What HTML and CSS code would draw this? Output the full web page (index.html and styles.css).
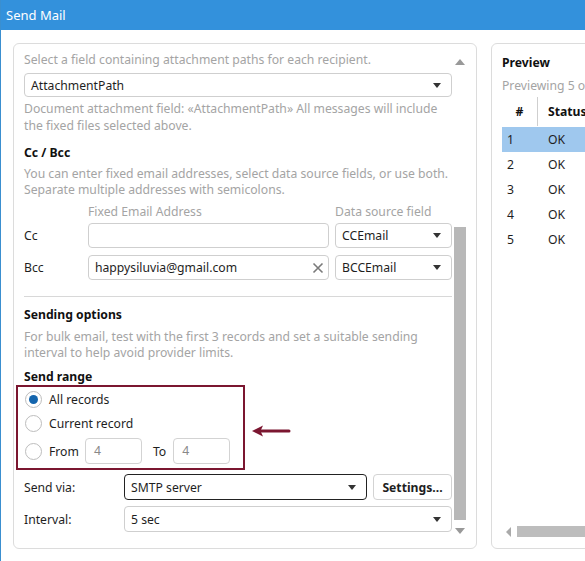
FILE: index.html
```html
<!DOCTYPE html>
<html>
<head>
<meta charset="utf-8">
<link rel="stylesheet" href="styles.css">
</head>
<body>
<div class="window">
  <div class="titlebar">Send Mail</div>
  <div class="main">
    <div class="panel left">
      <div class="content">
        <p class="hint first">Select a field containing attachment paths for each recipient.</p>
        <div class="select wide"><span>AttachmentPath</span><i class="caret"></i></div>
        <p class="hint desc1">Document attachment field: «AttachmentPath» All messages will include<br>the fixed files selected above.</p>
        <h3 class="heading h-cc">Cc / Bcc</h3>
        <p class="hint desc2">You can enter fixed email addresses, select data source fields, or use both.<br>Separate multiple addresses with semicolons.</p>
        <div class="colheads"><span class="ch1 hint">Fixed Email Address</span><span class="ch2 hint">Data source field</span></div>
        <div class="addr-row">
          <span class="lbl">Cc</span>
          <div class="input addr"></div>
          <div class="select ds"><span>CCEmail</span><i class="caret"></i></div>
        </div>
        <div class="addr-row second">
          <span class="lbl">Bcc</span>
          <div class="input addr"><span>happysiluvia@gmail.com</span>
            <svg class="clear" width="12" height="12" viewBox="0 0 12 12"><path d="M1.5 1.5 L10.5 10.5 M10.5 1.5 L1.5 10.5" stroke="#7a7a7a" stroke-width="1.6" fill="none"/></svg>
          </div>
          <div class="select ds"><span>BCCEmail</span><i class="caret"></i></div>
        </div>
        <div class="divider"></div>
        <h3 class="heading h-send">Sending options</h3>
        <p class="hint desc3">For bulk email, test with the first 3 records and set a suitable sending<br>interval to help avoid provider limits.</p>
        <h3 class="heading h-range">Send range</h3>
        <div class="range-row">
          <div class="range-box">
            <label class="radio-row r1"><span class="radio checked"></span><span>All records</span></label>
            <label class="radio-row r2"><span class="radio"></span><span>Current record</span></label>
            <label class="radio-row r3"><span class="radio"></span><span>From</span><span class="num from">4</span><span class="to">To</span><span class="num">4</span></label>
          </div>
          <svg class="arrow" width="40" height="14" viewBox="0 0 40 14"><path d="M38 7 H10" stroke="#7b1630" stroke-width="3" stroke-linecap="round"/><path d="M1 7 L12 1.5 L9.5 7 L12 12.5 Z" fill="#7b1630"/></svg>
        </div>
        <div class="via-row first-via">
          <span class="lbl2">Send via:</span>
          <div class="select via focused"><span>SMTP server</span><i class="caret"></i></div>
          <div class="button">Settings...</div>
        </div>
        <div class="via-row interval">
          <span class="lbl2">Interval:</span>
          <div class="select intv"><span>5 sec</span><i class="caret"></i></div>
        </div>
      </div>
      <div class="vscroll">
        <i class="arr-up"></i>
        <div class="track"><div class="thumb"></div></div>
        <i class="arr-down"></i>
      </div>
    </div>
    <div class="panel right">
      <h3 class="heading preview">Preview</h3>
      <p class="hint pv">Previewing 5 of 5 records</p>
      <div class="table">
        <div class="thead"><span class="c1">#</span><span class="c2">Status</span></div>
        <div class="tr sel"><span class="c1">1</span><span class="c2">OK</span></div>
        <div class="tr"><span class="c1">2</span><span class="c2">OK</span></div>
        <div class="tr"><span class="c1">3</span><span class="c2">OK</span></div>
        <div class="tr"><span class="c1">4</span><span class="c2">OK</span></div>
        <div class="tr"><span class="c1">5</span><span class="c2">OK</span></div>
      </div>
      <div class="hscroll"><i class="arr-left"></i><div class="hthumb"></div></div>
    </div>
  </div>
</div>
</body>
</html>
```

FILE: styles.css
```css
* { box-sizing: border-box; }
html, body { margin: 0; padding: 0; background: #fff; overflow: hidden; }
body {
  font-family: "Noto Sans", "Open Sans", sans-serif;
  font-size: 12.2px;
  color: #1e1e1e;
  width: 585px;
  height: 561px;
}
.window {
  height: 561px;
  border-left: 1px solid #3a8fd0;
  display: flex;
  flex-direction: column;
  overflow: hidden;
}
.titlebar {
  height: 30px;
  background: #3391dc;
  color: #fff;
  font-size: 13px;
  line-height: 31px;
  padding-left: 6px;
  margin-left: -1px;
}
.main {
  display: flex;
  gap: 14px;
  padding: 13px 0 0 12px;
}
.panel {
  border: 1px solid #dcdcdc;
  border-radius: 6px;
  height: 506px;
  flex-shrink: 0;
}
.left {
  width: 464px;
  display: flex;
  padding: 7px 10px 0 10px;
}
.content { width: 428px; }
p { margin: 0; }
h3 { margin: 0; }
.hint { color: #a4a4a4; line-height: 17px; white-space: nowrap; }
.heading { font-size: 12.2px; font-weight: 700; line-height: 17px; color: #111; }

.select, .input {
  height: 25px;
  border: 1px solid #cfcfcf;
  border-radius: 4px;
  display: flex;
  align-items: center;
  padding: 0 10px 0 6px;
  background: #fff;
}
.select span, .input span { flex: 1; }
.caret {
  width: 0; height: 0;
  border-left: 4px solid transparent;
  border-right: 4px solid transparent;
  border-top: 5px solid #333;
}
.wide { margin-top: 5px; height: 24px; }
.desc1 { margin-top: 3px; }
.h-cc { margin-top: 10px; }
.desc2 { margin-top: 5px; line-height: 16px; }
.colheads { margin-top: 5px; display: flex; line-height: 17px; }
.ch1 { margin-left: 64px; width: 247px; }
.addr-row { display: flex; align-items: center; margin-top: 3px; }
.addr-row.second { margin-top: 7px; }
.lbl { width: 64px; }
.addr { width: 241px; padding-right: 4px; }
.clear { margin-top: 1px; }
.ds { width: 117px; margin-left: 6px; }
.divider { height: 1px; background: #d8d8d8; margin-top: 16px; }
.h-send { margin-top: 9px; }
.desc3 { margin-top: 6px; line-height: 16px; }
.h-range { margin-top: 7px; }
.range-row { display: flex; align-items: center; margin-left: -8px; }
.range-box {
  width: 229px;
  border: 2px solid #7b1630;
  padding: 0 0 3px 7px;
}
.radio-row { display: flex; align-items: center; height: 24px; }
.radio-row.r3 { height: 28px; margin-top: 2px; }
.radio {
  width: 17px; height: 17px;
  border: 1px solid #bdbdbd;
  border-radius: 50%;
  margin-right: 7px;
  background: #fff;
  position: relative;
}
.radio.checked::after {
  content: "";
  position: absolute;
  left: 3px; top: 3px;
  width: 9px; height: 9px;
  border-radius: 50%;
  background: #1465ad;
}
.num {
  width: 57px; height: 26px;
  border: 1px solid #d3d3d3;
  border-radius: 4px;
  color: #888;
  padding-left: 8px;
  line-height: 24px;
}
.num.from { margin-left: 6px; }
.to { margin: 0 7px 0 11px; }
.arrow { margin-left: 6px; margin-top: 6px; }
.via-row { display: flex; align-items: center; margin-top: 6px; }
.via-row.first-via { margin-top: 4px; }
.lbl2 { width: 100px; }
.via { width: 243px; border-color: #222; height: 26px; }
.button {
  width: 79px; height: 26px;
  margin-left: 6px;
  border: 1px solid #d3d3d3;
  border-radius: 4px;
  font-weight: 700;
  display: flex; align-items: center; justify-content: center;
}
.intv { width: 328px; height: 26px; }

.vscroll {
  width: 14px;
  margin-left: 2px;
  display: flex;
  flex-direction: column;
  align-items: center;
  height: 494px;
}
.arr-up, .arr-down {
  width: 0; height: 0;
  border-left: 5px solid transparent;
  border-right: 5px solid transparent;
}
.arr-up { border-bottom: 6px solid #999; margin-top: 8px; }
.arr-down { border-top: 6px solid #999; margin-bottom: 11px; }
.track { flex: 1; width: 12px; }
.thumb { width: 12px; height: 293px; margin-top: 162px; background: #b8b8b8; }

.right {
  width: 200px;
  padding: 10px 0 0 10px;
  display: flex;
  flex-direction: column;
  overflow: hidden;
}
.preview { line-height: 17px; }
.pv { margin-top: 6px; }
.table { margin-top: 2px; }
.thead { display: flex; height: 31px; align-items: center; font-weight: 700; color: #111; }
.thead .c1 { width: 36px; text-align: center; border-right: 1px solid #cfcfcf; height: 29px; line-height: 29px; }
.thead .c2 { padding-left: 10px; }
.tr { display: flex; height: 25px; align-items: center; }
.tr.sel { background: #9fc8ee; }
.tr .c1 { width: 36px; padding-left: 5px; }
.tr .c2 { padding-left: 10px; }
.hscroll { margin-top: auto; margin-bottom: 11px; display: flex; align-items: center; gap: 6px; }
.arr-left {
  width: 0; height: 0;
  border-top: 5px solid transparent;
  border-bottom: 5px solid transparent;
  border-right: 5px solid #aaa;
  margin-left: 4px;
}
.hthumb { flex: 1; height: 11px; background: #bdbdbd; }
```
